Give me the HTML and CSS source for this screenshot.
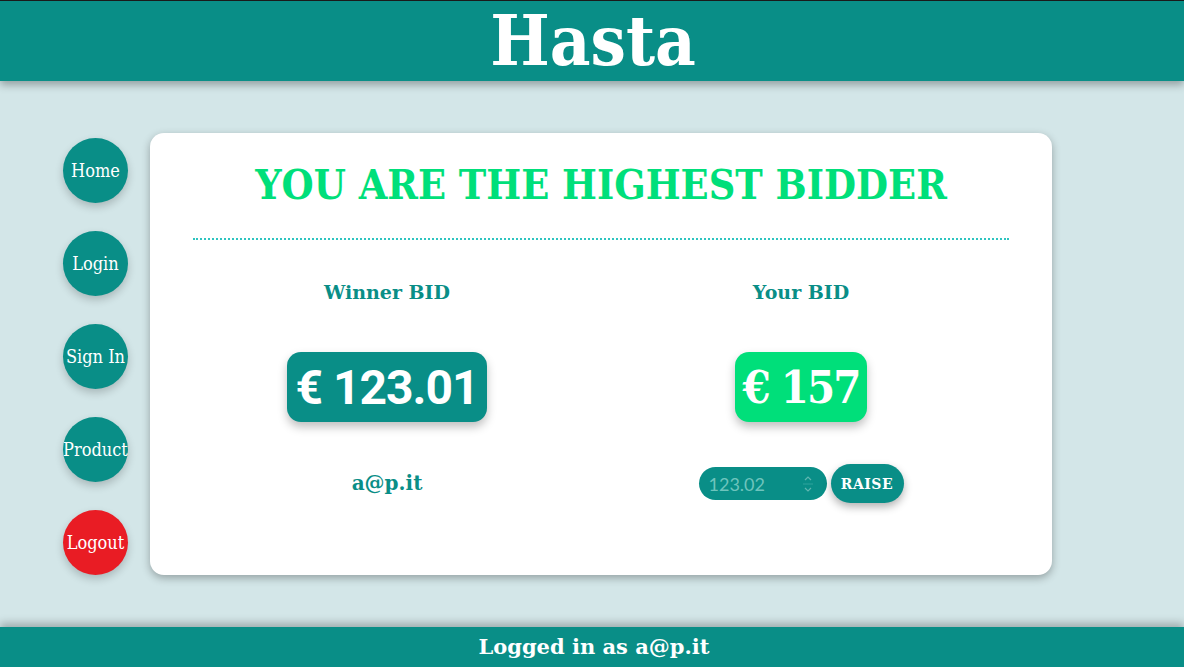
FILE: index.html
```html
<!DOCTYPE html>
<html lang="it">
<head>
<meta charset="utf-8">
<title>Hasta</title>
<link rel="stylesheet" href="styles.css">
</head>
<body>
<div class="page">
  <header class="topbar"><h1 class="brand">Hasta</h1></header>
  <main class="main">
    <nav class="nav">
      <a class="navbtn" href="#">Home</a>
      <a class="navbtn" href="#">Login</a>
      <a class="navbtn" href="#">Sign In</a>
      <a class="navbtn" href="#">Product</a>
      <a class="navbtn logout" href="#">Logout</a>
    </nav>
    <section class="card">
      <h2 class="title">YOU ARE THE HIGHEST BIDDER</h2>
      <hr class="sep">
      <div class="cols">
        <div class="col">
          <div class="label">Winner BID</div>
          <div class="price teal">€ 123.01</div>
          <div class="user">a@p.it</div>
        </div>
        <div class="col">
          <div class="label">Your BID</div>
          <div class="price green">€ 157</div>
          <div class="raise-row">
            <div class="numbox">
              <input class="num" type="text" placeholder="123.02">
              <svg class="spin" width="10" height="22" viewBox="0 0 10 22"><path d="M2 7 L5 4 L8 7" fill="none" stroke="#5fb6b0" stroke-width="1.2"/><line x1="0" y1="11" x2="10" y2="11" stroke="#2ea39c" stroke-width="1"/><path d="M2 15 L5 18 L8 15" fill="none" stroke="#5fb6b0" stroke-width="1.2"/></svg>
            </div>
            <button class="raise">RAISE</button>
          </div>
        </div>
      </div>
    </section>
  </main>
  <footer class="footbar">Logged in as a@p.it</footer>
</div>
</body>
</html>
```

FILE: styles.css
```css
* { box-sizing: border-box; }
html, body { margin: 0; padding: 0; }
body {
  background: #d3e6e8;
  font-family: "DejaVu Serif", serif;
  color: #098e87;
}
.page {
  min-height: 100vh;
  display: flex;
  flex-direction: column;
}
.topbar {
  background: #098e87;
  height: 81px;
  border-top: 1px solid #1a1a1a;
  box-shadow: 0 4px 8px rgba(0,0,0,0.3);
  display: flex;
  justify-content: center;
  align-items: center;
  position: relative;
  z-index: 2;
}
.brand {
  margin: 0;
  color: #fff;
  font-family: "DejaVu Serif", serif;
  font-stretch: condensed;
  font-weight: bold;
  font-size: 70px;
  line-height: 1;
  padding-left: 2px;
}
.main {
  display: flex;
  align-items: flex-start;
  padding: 52px 0 0 63px;
}
.nav {
  display: flex;
  flex-direction: column;
  gap: 28px;
  margin-top: 5px;
}
.navbtn {
  width: 65px;
  height: 65px;
  border-radius: 50%;
  background: #098e87;
  color: #fff;
  text-decoration: none;
  display: flex;
  align-items: center;
  justify-content: center;
  font-family: "DejaVu Serif", serif;
  font-stretch: condensed;
  font-size: 18px;
  white-space: nowrap;
  box-shadow: 0 4px 8px rgba(0,0,0,0.2);
}
.navbtn.logout { background: #e91c24; }
.card {
  margin-left: 22px;
  width: 902px;
  height: 442px;
  background: #fff;
  border-radius: 14px;
  box-shadow: 0 3px 8px rgba(0,0,0,0.3);
  padding: 24px 43px 0;
}
.title {
  margin: 0;
  text-align: center;
  color: #00df7a;
  font-weight: bold;
  font-stretch: condensed;
  font-size: 41px;
  line-height: 56px;
  white-space: nowrap;
}
.sep {
  margin: 25px 0 0;
  border: 0;
  border-top: 2px dotted #2ec4c0;
  height: 0;
}
.cols {
  margin-left: -13px;
  display: grid;
  grid-template-columns: 414px 414px;
  padding-top: 37px;
}
.col {
  display: flex;
  flex-direction: column;
  align-items: center;
}
.label {
  font-weight: bold;
  font-size: 19px;
  line-height: 30px;
}
.price {
  margin-top: 45px;
  height: 70px;
  border-radius: 14px;
  color: #fff;
  display: flex;
  align-items: center;
  padding: 0 8px;
  box-shadow: 0 5px 10px rgba(0,0,0,0.25);
  white-space: nowrap;
}
.price.teal {
  background: #098e87;
  font-family: Roboto, sans-serif;
  font-weight: bold;
  font-size: 48px;
  letter-spacing: -1px;
}
.price.green {
  background: #00df7a;
  font-family: "DejaVu Serif", serif;
  font-stretch: condensed;
  font-weight: bold;
  font-size: 45px;
  letter-spacing: -2px;
}
.user {
  margin-top: 42px;
  height: 39px;
  line-height: 39px;
  font-weight: bold;
  font-size: 20px;
}
.raise-row {
  margin-top: 42px;
  display: flex;
  align-items: center;
  gap: 4px;
  height: 39px;
}
.numbox {
  width: 128px;
  height: 33px;
  border-radius: 17px;
  background: #098e87;
  display: flex;
  align-items: center;
  padding: 0 14px 0 10px;
}
.num {
  flex: 1;
  min-width: 0;
  border: 0;
  background: transparent;
  font-family: Lato, sans-serif;
  font-size: 18px;
  color: #fff;
  outline: none;
  padding: 0;
}
.num::placeholder { color: #6ec4bd; }
.spin { flex: none; }
.raise {
  width: 73px;
  height: 39px;
  border: 0;
  border-radius: 20px;
  background: #098e87;
  color: #fff;
  font-family: "DejaVu Serif", serif;
  font-weight: bold;
  font-size: 14px;
  letter-spacing: 0.5px;
  box-shadow: 0 4px 8px rgba(0,0,0,0.3);
  padding: 0;
}
.footbar {
  margin-top: auto;
  height: 40px;
  background: #098e87;
  color: #fff;
  text-align: center;
  font-weight: bold;
  font-size: 21px;
  line-height: 40px;
  padding-left: 4px;
  box-shadow: 0 -4px 8px rgba(0,0,0,0.25);
}
```
